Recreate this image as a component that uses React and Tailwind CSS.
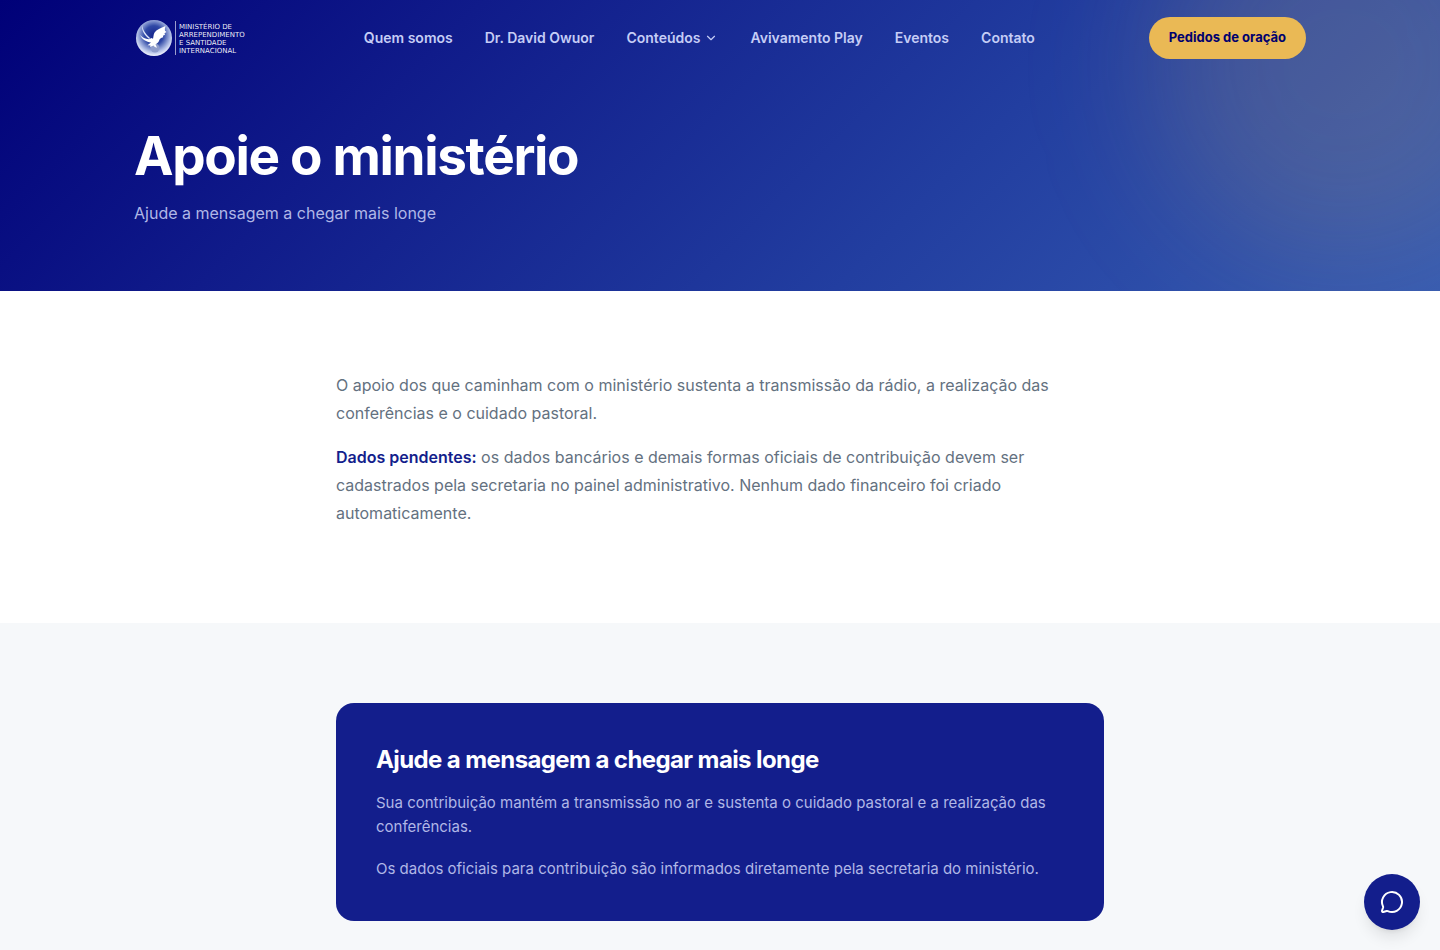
import { ChevronDown, MessageCircle } from "lucide-react";

const links = [
    { label: "Quem somos", href: "#quem-somos" },
    { label: "Dr. David Owuor", href: "#david-owuor" },
    { label: "Conteúdos", href: "#conteudos", menu: true },
    { label: "Avivamento Play", href: "#avivamento-play" },
    { label: "Eventos", href: "#eventos" },
    { label: "Contato", href: "#contato" },
];

function Logo() {
    return (
        <a href="#inicio" aria-label="Página inicial" className="flex shrink-0 items-center">
            <svg viewBox="0 0 116 40" className="h-10 w-[116px]">
                <defs>
                    <radialGradient id="globe" cx="50%" cy="42%" r="58%">
                        <stop offset="0" stopColor="#14248c" />
                        <stop offset="0.45" stopColor="#3049a6" />
                        <stop offset="0.8" stopColor="#b0bee6" />
                        <stop offset="1" stopColor="#f2f5ff" />
                    </radialGradient>
                </defs>
                <circle cx="20" cy="20" r="18" fill="url(#globe)" />
                <circle cx="21" cy="30" r="4.5" fill="#8f9dcb" />
                <path d="M8 7c.8 4.500 3 8.500 8 13l-.8 1C10.500 17.500 7.500 12.500 8 7z" fill="#dfe6fa" />
                <path d="M6 17c2.500 2.500 5 3.800 9 4.300l2.500-1.300 1.500.7c.6-2 .3-4 1.600-6.200 2-3 6-4.500 10.900-6.500-.6 2-.8 3.300-.5 4.800l1.500 1.200-2 1.200.5 1.500-2 1 .2 1.500-2.200.8-1.500 1.500c-.6 2.500-2 4-4 4.700l1.500 3.500-2.200-.7-1.300-1.500-3.500 1.500.5-1.500-3-.3 3.500-2.700c-4.500-.7-9-3-11-7.500z" fill="#fff" />
                <path d="M41.500 3v34" stroke="#fff" strokeOpacity="0.6" />
                <g fill="#fff" fillOpacity="0.95" fontFamily="'DejaVu Sans', sans-serif" fontSize="7">
                    <text x="45" y="11">MINISTÉRIO DE</text>
                    <text x="45" y="19">ARREPENDIMENTO</text>
                    <text x="45" y="27">E SANTIDADE</text>
                    <text x="45" y="35">INTERNACIONAL</text>
                </g>
            </svg>
        </a>
    );
}

function Header() {
    return (
        <header className="relative mx-auto flex h-[76px] max-w-[1220px] items-center justify-between px-6">
            <Logo />
            <nav className="hidden items-center gap-8 text-sm font-semibold text-[#c5cdf6] lg:flex">
                {links.map((link) => (
                    <a key={link.label} href={link.href} className="flex items-center gap-1 whitespace-nowrap hover:text-white">
                        {link.label}
                        {link.menu && <ChevronDown size={14} />}
                    </a>
                ))}
            </nav>
            <a href="#oracao" className="flex h-[42px] items-center whitespace-nowrap rounded-full bg-[#eab955] px-5 text-[13px] font-bold text-[#00006e]">Pedidos de oração</a>
        </header>
    );
}

export default function App() {
    return (
        <div className="min-h-screen bg-[#f6f8fa] font-['Inter','Liberation_Sans',sans-serif]">
            <div className="relative overflow-hidden bg-[linear-gradient(135deg,#000078_0%,#101b8a_28%,#223ea0_65%,#365bb2_100%)]">
                <div className="absolute -right-24 -top-32 size-96 rounded-full bg-[#eab955]/15 blur-3xl" />
                <Header />
                <section className="relative mx-auto max-w-[1220px] px-6 pb-16 pt-12">
                    <h1 className="text-[53px] font-bold leading-[64px] tracking-tight text-white">Apoie o ministério</h1>
                    <p className="mt-3 text-base leading-[27px] text-[#b0b7e6]">Ajude a mensagem a chegar mais longe</p>
                </section>
            </div>

            <section className="bg-white px-6 py-20">
                <div className="mx-auto max-w-3xl text-base leading-7 text-[#64717f]">
                    <p className="mb-4">O apoio dos que caminham com o ministério sustenta a transmissão da rádio, a realização das conferências e o cuidado pastoral.</p>
                    <p className="mb-4"><strong className="font-semibold text-[#131e8c]">Dados pendentes:</strong> os dados bancários e demais formas oficiais de contribuição devem ser cadastrados pela secretaria no painel administrativo. Nenhum dado financeiro foi criado automaticamente.</p>
                </div>
            </section>

            <section className="px-6 py-20">
                <div className="mx-auto max-w-3xl rounded-[18px] bg-[#131e8c] p-10">
                    <h2 className="text-2xl font-bold leading-[34px] tracking-tight text-white">Ajude a mensagem a chegar mais longe</h2>
                    <div className="mt-[14px] space-y-[18px] text-[15px] leading-6 text-[#b0b7e6]">
                        <p>Sua contribuição mantém a transmissão no ar e sustenta o cuidado pastoral e a realização das conferências.</p>
                        <p>Os dados oficiais para contribuição são informados diretamente pela secretaria do ministério.</p>
                    </div>
                </div>
            </section>

            <button type="button" aria-label="Abrir conversa" className="fixed bottom-5 right-5 flex size-14 items-center justify-center rounded-full bg-[#131e8c] text-white shadow-lg">
                <MessageCircle size={24} strokeWidth={2} />
            </button>
        </div>
    );
}
